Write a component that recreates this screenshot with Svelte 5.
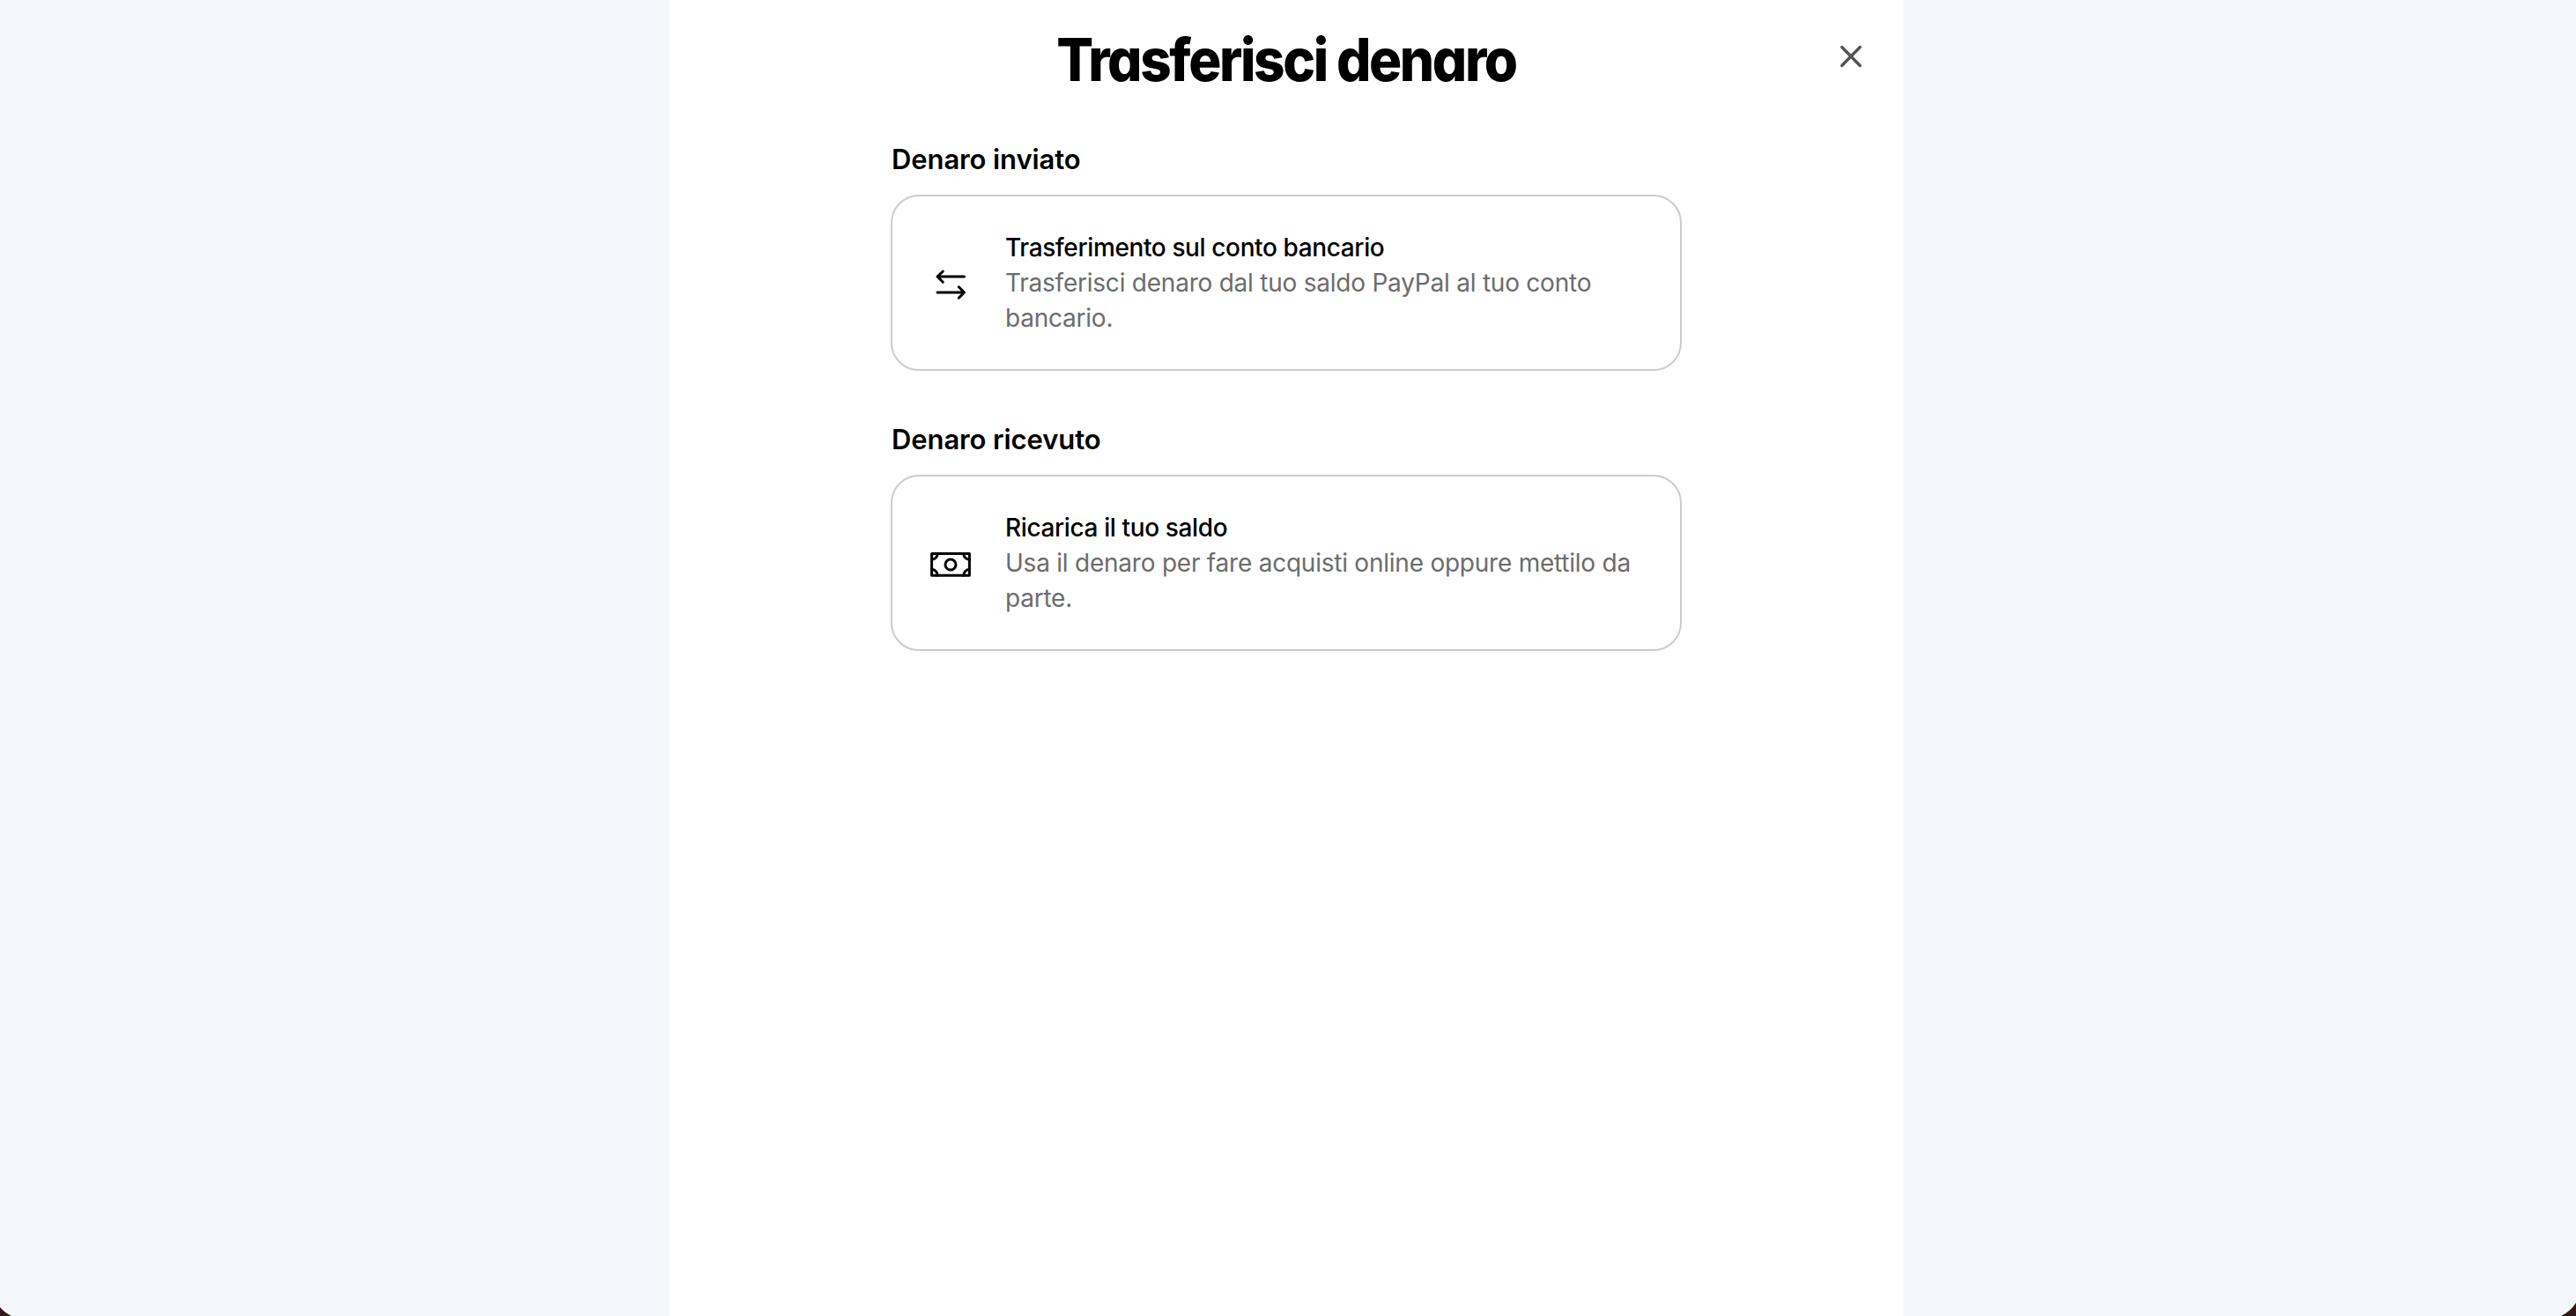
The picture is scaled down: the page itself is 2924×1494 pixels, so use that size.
<script lang="ts">
	type Option = {
		heading: string;
		icon: 'transfer' | 'cash';
		title: string;
		description: string;
	};

	export let close: () => void = () => {};

	const options: Option[] = [
		{
			heading: 'Denaro inviato',
			icon: 'transfer',
			title: 'Trasferimento sul conto bancario',
			description: 'Trasferisci denaro dal tuo saldo PayPal al tuo conto bancario.'
		},
		{
			heading: 'Denaro ricevuto',
			icon: 'cash',
			title: 'Ricarica il tuo saldo',
			description: 'Usa il denaro per fare acquisti online oppure mettilo da parte.'
		}
	];
</script>

<div class="page">
	<main>
		<header>
			<h1>Trasferisci denaro</h1>
			<button class="close" aria-label="Chiudi" on:click={close}>
				<svg viewBox="0 0 48 48" width="48" height="48">
					<path d="M13.7 13.5 34.3 34.5M34.3 13.5 13.7 34.5" />
				</svg>
			</button>
		</header>

		{#each options as option}
			<section>
				<h2>{option.heading}</h2>
				<button class="card">
					<svg class="icon" viewBox="0 0 48 48" width="48" height="48">
						{#if option.icon === 'transfer'}
							<path d="M9 15H39.5M15.3 9 9 15 15.3 21.2" />
							<path d="M9 33H39.5M33.3 26.8 39.5 33 33.3 39.2" />
						{:else}
							<rect x="2.6" y="11.6" width="42.8" height="24.6" />
							<circle cx="24" cy="24" r="6" />
							<path d="M9.2 11.6A6.6 6.6 0 0 1 2.6 18.2M38.8 11.6A6.6 6.6 0 0 0 45.4 18.2" />
							<path d="M9.2 36.2A6.6 6.6 0 0 0 2.6 29.6M38.8 36.2A6.6 6.6 0 0 1 45.4 29.6" />
						{/if}
					</svg>
					<span class="text">
						<span class="title">{option.title}</span>
						<span class="description">{option.description}</span>
					</span>
				</button>
			</section>
		{/each}
	</main>

	<svg class="corner left" viewBox="0 0 13 10" width="13" height="10">
		<path d="M0 0Q5 6 13 10H0Z" />
	</svg>
	<svg class="corner right" viewBox="0 0 17 15" width="17" height="15">
		<path d="M17 0Q10.5 10 0 15H17Z" />
	</svg>
</div>

<style>
	:global(body) {
		background: #f4f6fb;
	}

	.page {
		position: relative;
		display: flex;
		justify-content: center;
		height: 100vh;
		overflow: hidden;
		font-family: Inter, 'Liberation Sans', sans-serif;
		color: #000;
	}

	main {
		box-sizing: border-box;
		width: 1400px;
		margin-right: 4px;
		background: #fff;
	}

	header {
		position: relative;
		height: 151px;
		box-sizing: border-box;
		padding-top: 20px;
	}

	h1 {
		margin: 0;
		font-size: 67px;
		line-height: 96px;
		font-weight: 800;
		font-feature-settings: 'cv11';
		letter-spacing: -2.6px;
		text-align: center;
		white-space: nowrap;
		transform: scaleX(0.925);
	}

	button {
		padding: 0;
		border: 0;
		background: none;
		font: inherit;
		color: inherit;
		text-align: left;
	}

	svg {
		display: block;
		flex: none;
	}

	.close {
		position: absolute;
		top: 40px;
		right: 35px;
	}

	.close path {
		stroke: #515354;
		stroke-width: 3.3;
		stroke-linecap: round;
	}

	section {
		width: 898px;
		height: 318px;
		margin: 0 auto;
	}

	h2 {
		height: 70px;
		margin: 0;
		padding-left: 1px;
		box-sizing: border-box;
		padding-top: 10px;
		font-size: 31px;
		line-height: 40px;
		font-weight: 600;
		letter-spacing: -0.1px;
	}

	.card {
		display: flex;
		align-items: center;
		gap: 38px;
		box-sizing: border-box;
		width: 100%;
		height: 200px;
		padding: 0 42px;
		border: 2px solid #ccc;
		border-radius: 32px;
	}

	.icon {
		margin-top: 4px;
		fill: none;
		stroke: #000;
		stroke-width: 3;
		stroke-linecap: round;
		stroke-linejoin: round;
	}

	.text {
		display: flex;
		flex-direction: column;
		font-size: 28px;
		line-height: 40px;
		letter-spacing: -0.23px;
	}

	.title {
		font-weight: 500;
		letter-spacing: -0.38px;
	}

	.description {
		color: #6c6c6c;
	}

	.corner {
		position: absolute;
		bottom: 0;
		fill: #32191a;
	}

	.left {
		left: 0;
	}

	.right {
		right: 0;
	}
</style>
